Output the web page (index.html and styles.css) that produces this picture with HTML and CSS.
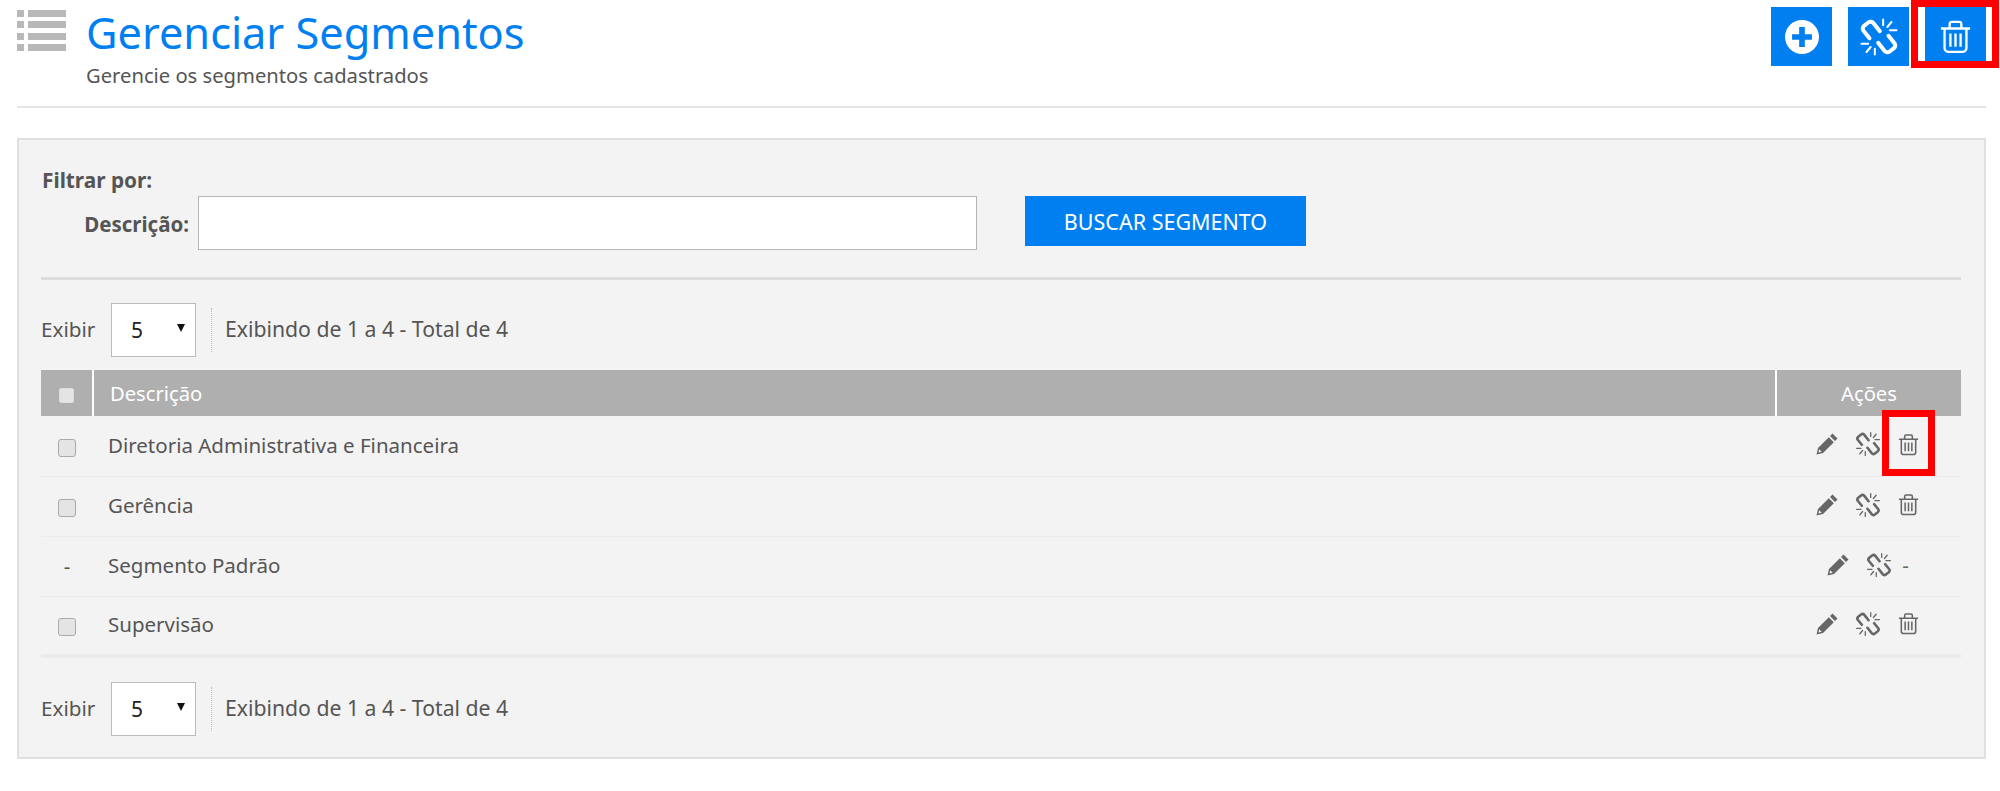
FILE: index.html
```html
<!DOCTYPE html>
<html lang="pt-BR">
<head>
    <meta charset="UTF-8">
    <title>Gerenciar Segmentos</title>
    <link rel="stylesheet" href="styles.css">
</head>
<body>
    <svg class="icon-defs" width="0" height="0">
        <symbol id="i-unlink" viewBox="0 0 24 24">
            <g fill="none" stroke="currentColor" stroke-width="2.4" stroke-linecap="round" stroke-linejoin="round">
                <path d="M12.5 8.5 8.6 3.6a2.2 2.2 0 0 0-3-.3L3 5.300a2.200 2.200 0 0 0-.3 3l3.600 4.400"/>
                <path d="M11.500 15.500l3.900 4.900a2.200 2.200 0 0 0 3 .3l2.600-2a2.200 2.200 0 0 0 .3-3l-3.600-4.400"/>
            </g>
            <g fill="none" stroke="currentColor" stroke-width="1.200" stroke-linecap="round">
                <path d="M14.500 1.500v3.500M19.500 3l-2.500 3M22.500 8h-4M1.500 16h4M4.500 21l2.500-3M9.500 22.500V19"/>
            </g>
        </symbol>
        <symbol id="i-trash" viewBox="0 0 24 24">
            <g fill="none" stroke="currentColor" stroke-width="1.600" stroke-linejoin="round">
                <path d="M2 6.500h20M8 6V3.500a1.500 1.500 0 0 1 1.500-1.500h5A1.500 1.500 0 0 1 16 3.500V6"/>
                <path d="M4.500 6.500V20a2.500 2.500 0 0 0 2.500 2.500h10a2.500 2.500 0 0 0 2.500-2.500V6.500"/>
                <path d="M8.500 10v9M12 10v9M15.500 10v9"/>
            </g>
        </symbol>
        <symbol id="i-pencil" viewBox="0 0 24 24">
            <path fill="currentColor" d="M17.500 1.500 22.500 6.500 20 9 15 4zM13.800 5.200l5 5L8 21l-6.500 1.500L3 16zM4.200 17.300 3.500 20.500l3.200-.7z"/>
        </symbol>
    </svg>

    <div class="page">
        <header class="page-header">
            <svg class="list-icon" viewBox="0 0 49 41" aria-hidden="true">
                <path d="M0 0h7v7H0zM11 0h38v7H11zM0 11h7v7H0zM11 11h38v7H11zM0 23h7v7H0zM11 23h38v7H11zM0 34h7v7H0zM11 34h38v7H11z"/>
            </svg>
            <div class="page-title">
                <h1>Gerenciar Segmentos</h1>
                <p>Gerencie os segmentos cadastrados</p>
            </div>
            <div class="page-actions">
                <a class="btn-icon" href="#">
                    <svg viewBox="0 0 24 24" width="34" height="34"><path fill="currentColor" fill-rule="evenodd" d="M12 0a12 12 0 1 1 0 24a12 12 0 1 1 0-24zM10 5v5H5v4h5v5h4v-5h5v-4h-5V5z"/></svg>
                </a>
                <a class="btn-icon" href="#">
                    <svg width="40" height="40"><use href="#i-unlink"/></svg>
                </a>
                <a class="btn-icon marked" href="#">
                    <svg width="35" height="35"><use href="#i-trash"/></svg>
                </a>
            </div>
        </header>

        <section class="panel">
            <form class="filter">
                <strong class="filter-title">Filtrar por:</strong>
                <div class="filter-row">
                    <label for="descricao">Descrição:</label>
                    <input type="text" id="descricao">
                    <button type="button">BUSCAR SEGMENTO</button>
                </div>
            </form>

            <div class="pager">
                <span class="pager-label">Exibir</span>
                <div class="select-wrap">
                    <select><option>5</option></select>
                </div>
                <span class="pager-info">Exibindo de 1 a 4 - Total de 4</span>
            </div>

            <table class="grid">
                <thead>
                    <tr>
                        <th class="col-check"><input type="checkbox"></th>
                        <th class="col-desc">Descrição</th>
                        <th class="col-actions">Ações</th>
                    </tr>
                </thead>
                <tbody>
                    <tr>
                        <td class="col-check"><input type="checkbox"></td>
                        <td class="col-desc">Diretoria Administrativa e Financeira</td>
                        <td class="col-actions">
                            <span class="row-actions">
                                <svg width="24" height="24"><use href="#i-pencil"/></svg>
                                <svg width="26" height="26"><use href="#i-unlink"/></svg>
                                <span class="marked"><svg width="23" height="23"><use href="#i-trash"/></svg></span>
                            </span>
                        </td>
                    </tr>
                    <tr>
                        <td class="col-check"><input type="checkbox"></td>
                        <td class="col-desc">Gerência</td>
                        <td class="col-actions">
                            <span class="row-actions">
                                <svg width="24" height="24"><use href="#i-pencil"/></svg>
                                <svg width="26" height="26"><use href="#i-unlink"/></svg>
                                <svg width="23" height="23"><use href="#i-trash"/></svg>
                            </span>
                        </td>
                    </tr>
                    <tr>
                        <td class="col-check">-</td>
                        <td class="col-desc">Segmento Padrão</td>
                        <td class="col-actions">
                            <span class="row-actions">
                                <svg width="24" height="24"><use href="#i-pencil"/></svg>
                                <svg width="26" height="26"><use href="#i-unlink"/></svg>
                                <span class="dash">-</span>
                            </span>
                        </td>
                    </tr>
                    <tr>
                        <td class="col-check"><input type="checkbox"></td>
                        <td class="col-desc">Supervisão</td>
                        <td class="col-actions">
                            <span class="row-actions">
                                <svg width="24" height="24"><use href="#i-pencil"/></svg>
                                <svg width="26" height="26"><use href="#i-unlink"/></svg>
                                <svg width="23" height="23"><use href="#i-trash"/></svg>
                            </span>
                        </td>
                    </tr>
                </tbody>
            </table>

            <div class="pager pager-bottom">
                <span class="pager-label">Exibir</span>
                <div class="select-wrap">
                    <select><option>5</option></select>
                </div>
                <span class="pager-info">Exibindo de 1 a 4 - Total de 4</span>
            </div>
        </section>
    </div>
</body>
</html>
```

FILE: styles.css
```css
body {
    margin: 0;
    background: #fff;
    color: #555;
    font-family: "Noto Sans", sans-serif;
    font-size: 20.500px;
}

.icon-defs {
    display: block;
    height: 0;
}

.page {
    padding: 0 14px 0 17px;
}

.page-header {
    display: flex;
    align-items: flex-start;
    height: 106px;
    border-bottom: 2px solid #e5e5e5;
}

.list-icon {
    width: 49px;
    height: 41px;
    margin: 10px 20px 0 0;
    fill: #b8b8b8;
}

.page-title {
    flex: 1;
}

.page-title h1 {
    margin: 0;
    padding-top: 6px;
    color: #0080f0;
    font-size: 43.300px;
    font-weight: 400;
    line-height: 54px;
}

.page-title p {
    margin: 0;
    padding-top: 3px;
    font-size: 20.200px;
    line-height: 24px;
}

.page-actions {
    display: flex;
    gap: 16px;
    padding-top: 7px;
}

.btn-icon {
    display: flex;
    align-items: center;
    justify-content: center;
    width: 61px;
    height: 59px;
    background: #0080f0;
    color: #fff;
}

.btn-icon.marked {
    position: relative;
}

.btn-icon.marked::after {
    content: "";
    position: absolute;
    top: -7px;
    left: -14px;
    width: 74px;
    height: 54px;
    border: 7px solid #f00;
}

.panel {
    margin-top: 30px;
    padding: 0 23px 0 22px;
    height: 617px;
    background: #f3f3f3;
    border: 2px solid #e0e0e0;
}

.filter {
    height: 137px;
    border-bottom: 3px solid #dcdcdc;
}

.filter-title {
    display: block;
    padding: 28px 0 0 1px;
    font-size: 20.800px;
    line-height: 24px;
}

.filter-row {
    display: flex;
    align-items: flex-start;
    margin-top: 4px;
}

.filter-row label {
    width: 157px;
    padding-top: 16px;
    padding-right: 9px;
    box-sizing: border-box;
    font-weight: 700;
    text-align: right;
    line-height: 24px;
}

.filter-row input {
    width: 779px;
    height: 54px;
    box-sizing: border-box;
    border: 1px solid #b5b5b5;
    background: #fff;
}

.filter-row button {
    width: 281px;
    height: 50px;
    margin-left: 48px;
    padding-top: 1px;
    border: 0;
    background: #0080f0;
    color: #fff;
    font-family: inherit;
    font-size: 21.500px;
}

.pager {
    display: flex;
    align-items: center;
    height: 54px;
    margin-top: 23px;
}

.pager-bottom {
    margin-top: 24px;
}

.pager-label {
    width: 55px;
    padding-bottom: 3px;
    font-size: 20.700px;
}

.select-wrap {
    position: relative;
    margin-left: 15px;
}

.select-wrap::after {
    content: "";
    position: absolute;
    top: 21px;
    right: 11px;
    border-left: 4.500px solid transparent;
    border-right: 4.500px solid transparent;
    border-top: 8px solid #111;
}

.select-wrap select {
    display: block;
    width: 85px;
    height: 54px;
    padding: 0 0 0 19px;
    appearance: none;
    border: 1px solid #bbb;
    border-radius: 0;
    background: #fff;
    color: #222;
    font-family: inherit;
    font-size: 21px;
}

.pager-info {
    margin-left: 15px;
    padding: 4px 0 6px 13px;
    border-left: 1px dotted #bbb;
    font-size: 21.200px;
    line-height: 34px;
}

.grid {
    width: 100%;
    margin-top: 13px;
    border-collapse: collapse;
    border-bottom: 4px solid #ebebeb;
}

.grid th {
    height: 46px;
    padding: 0;
    background: #afafaf;
    color: #fff;
    font-size: 20.200px;
    font-weight: 400;
    border-left: 2px solid #fff;
}

.grid th:first-child {
    border-left: 0;
}

.grid td {
    box-sizing: border-box;
    height: 60px;
    padding: 0;
    border-bottom: 1px solid #ebebeb;
}

.grid tr:last-child td {
    border-bottom: 0;
}

.col-check {
    width: 51px;
    text-align: center;
}

.grid .col-desc {
    padding-left: 16px;
    text-align: left;
}

.grid td.col-desc {
    padding-left: 15px;
    padding-bottom: 2px;
}

.grid td.col-actions {
    padding-top: 2px;
}

.grid td.col-check {
    padding-bottom: 1px;
}

.col-actions {
    width: 184px;
    text-align: center;
}

.col-check input {
    width: 18px;
    height: 18px;
    margin: 0;
    vertical-align: middle;
    appearance: none;
    border: 1px solid #aaa;
    border-radius: 3px;
    background: #e4e4e4;
}

th.col-check input {
    width: 15px;
    height: 15px;
    border-color: #ddd;
    border-radius: 2px;
    background: #e4e4e4;
}

.row-actions {
    display: inline-flex;
    align-items: center;
    justify-content: center;
    gap: 16px;
    margin-right: 2px;
    color: #666;
}

.row-actions .marked {
    position: relative;
    display: flex;
}

.row-actions .marked::after {
    content: "";
    position: absolute;
    top: -23px;
    left: -15px;
    width: 39px;
    height: 52px;
    border: 7px solid #f00;
}

.dash {
    margin-left: -6px;
}
```
